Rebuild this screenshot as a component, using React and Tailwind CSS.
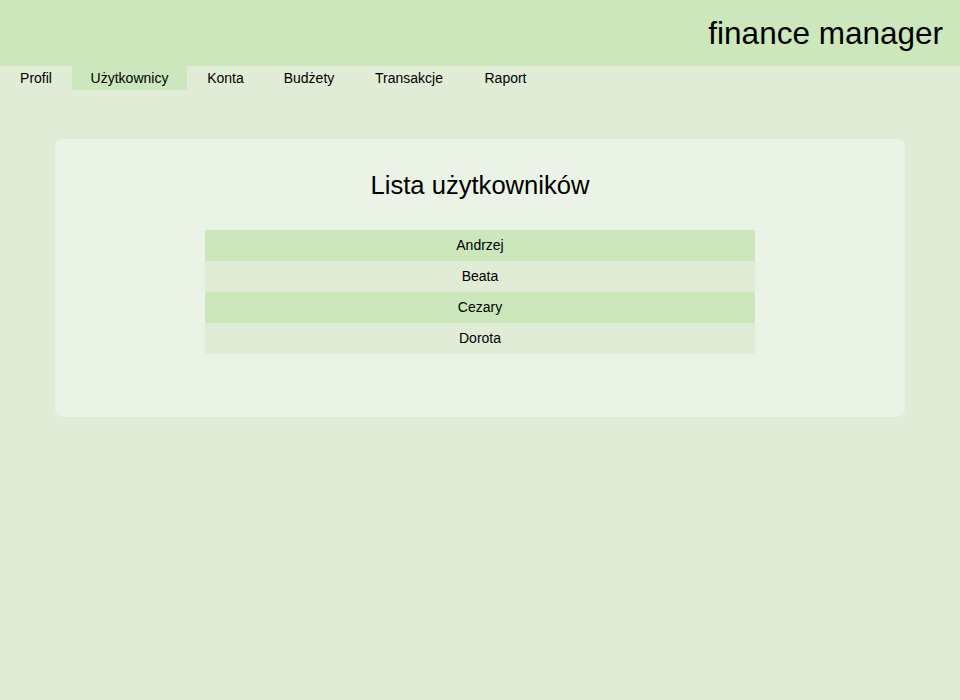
export default function App() {
  const tabs = [
    { t: "Profil", w: "w-[72px]" },
    { t: "Użytkownicy", w: "w-[115px]" },
    { t: "Konta", w: "w-[77px]" },
    { t: "Budżety", w: "w-[90px]" },
    { t: "Transakcje", w: "w-[110px]" },
    { t: "Raport", w: "w-[83px]" },
  ];
  const users = ["Andrzej", "Beata", "Cezary", "Dorota"];
  return (
    <div className="min-h-[700px] bg-[#e0ecd6] text-black" style={{ fontFamily: '"Liberation Sans", Arial, sans-serif' }}>
      <header className="h-[66px] bg-[#cbe7bb] flex items-center justify-end pr-[17px]">
        <h1 className="text-[31.5px] leading-none font-normal pt-[2px]">finance manager</h1>
      </header>
      <nav className="flex h-[24px]">
        {tabs.map(({ t, w }) => (
          <div
            key={t}
            className={`${w} text-center whitespace-nowrap text-[14px] leading-[24px] ${t === "Użytkownicy" ? "bg-[#cbe7bb]" : ""}`}
          >
            {t}
          </div>
        ))}
      </nav>
      <div className="px-[55px] pt-[49px]">
        <div className="bg-[#ebf3e7] rounded-[8px] pt-[32px] pb-[63px] flex flex-col items-center">
          <h2 className="text-[25.6px] leading-[28px] font-normal">Lista użytkowników</h2>
          <div className="mt-[31px] w-[550px] flex flex-col">
            {users.map((u, i) => (
              <div
                key={u}
                className={`h-[31px] leading-[31px] text-center text-[14px] ${i % 2 === 0 ? "bg-[#cbe7bb]" : "bg-[#e0ecd6]"}`}
              >
                {u}
              </div>
            ))}
          </div>
        </div>
      </div>
    </div>
  );
}
